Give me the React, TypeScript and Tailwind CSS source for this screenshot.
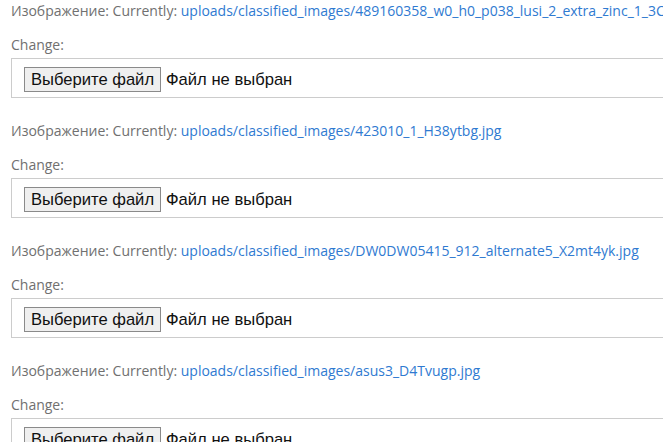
import React from "react";

const files = [
  "uploads/classified_images/489160358_w0_h0_p038_lusi_2_extra_zinc_1_3C.jpg",
  "uploads/classified_images/423010_1_H38ytbg.jpg",
  "uploads/classified_images/DW0DW05415_912_alternate5_X2mt4yk.jpg",
  "uploads/classified_images/asus3_D4Tvugp.jpg",
];

function Row({ path }: { path: string }) {
  return (
    <div className="h-[120px] pl-[11px] pt-[1px]">
      <div className="h-[20px] leading-[20px] text-[14px] text-[#707070] whitespace-nowrap" style={{ fontFamily: '"Open Sans", sans-serif' }}>
        Изображение: Currently: <a className="text-[#2f7ad1]" href="#">{path}</a>
      </div>
      <div className="mt-[14px] h-[20px] leading-[20px] text-[14px] text-[#707070]" style={{ fontFamily: '"Open Sans", sans-serif' }}>
        Change:
      </div>
      <div className="mt-[3px] h-[40px] w-[700px] border border-[#cccccc] bg-white pl-[12px] pt-[8px] flex items-start">
        <div className="h-[25px] w-[137px] border border-[#8a8a8a] bg-[#efefef] flex items-center justify-center pt-[2px] text-[16.6px] text-[#111] leading-none" style={{ fontFamily: '"Liberation Sans", Arial, sans-serif' }}>
          Выберите файл
        </div>
        <div className="ml-[5px] h-[25px] flex items-center pt-[2px] text-[16.6px] text-[#111] leading-none whitespace-nowrap" style={{ fontFamily: '"Liberation Sans", Arial, sans-serif' }}>
          Файл не выбран
        </div>
      </div>
    </div>
  );
}

export default function App() {
  return (
    <div className="w-[663px] h-[442px] overflow-hidden bg-white">
      {files.map((f) => (
        <Row key={f} path={f} />
      ))}
    </div>
  );
}
